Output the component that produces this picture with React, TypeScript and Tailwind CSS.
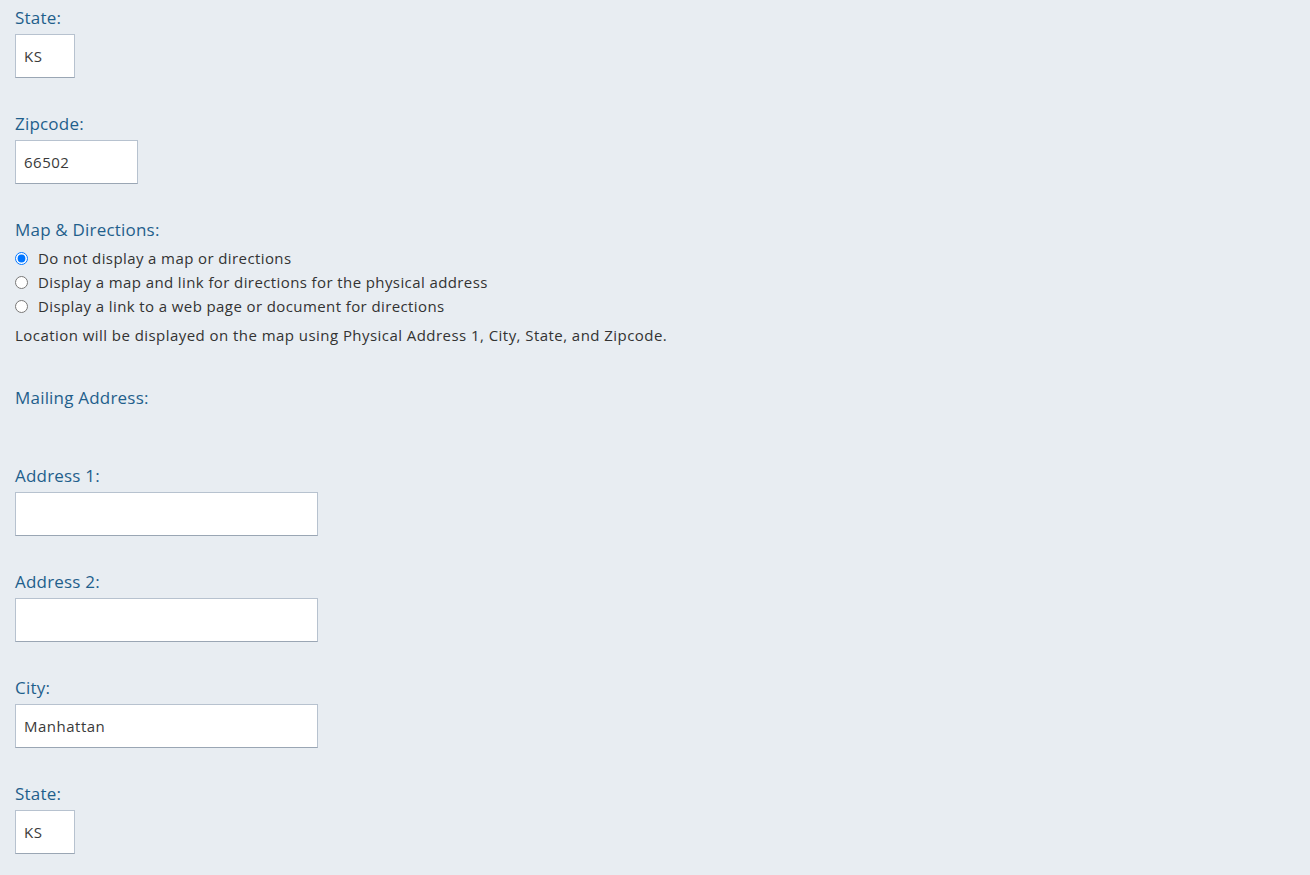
import React from "react";

const labelCls = "block text-[17px] leading-6 tracking-[0.2px] text-[#1f5f8c] mb-1";
const inputCls =
  "h-[44px] bg-white border border-[#b7c2cf] border-b-[#9aa6b4] px-[8px] text-[15px] tracking-[0.5px] text-[#3a3a3a] outline-none";

function Field({ label, value, width }: { label: string; value: string; width: string }) {
  return (
    <div className="mb-[34px]">
      <label className={labelCls}>{label}</label>
      <input className={`${inputCls} ${width}`} defaultValue={value} />
    </div>
  );
}

export default function App() {
  const options = [
    "Do not display a map or directions",
    "Display a map and link for directions for the physical address",
    "Display a link to a web page or document for directions",
  ];
  return (
    <div
      className="min-h-[875px] bg-[#e8edf2] px-[15px] pt-[6px] text-[#333333]"
      style={{ fontFamily: '"Open Sans", "Noto Sans", sans-serif' }}
    >
      <Field label="State:" value="KS" width="w-[60px]" />
      <Field label="Zipcode:" value="66502" width="w-[123px]" />
      <div className="mb-[39px]">
        <div className={labelCls}>Map &amp; Directions:</div>
        <div className="flex flex-col">
          {options.map((o, i) => (
            <label key={o} className="flex items-center h-6 text-[15px] tracking-[0.4px]">
              <input
                type="radio"
                name="map"
                defaultChecked={i === 0}
                className="m-0 w-[13px] h-[13px] mr-[10px]"
              />
              {o}
            </label>
          ))}
        </div>
        <p className="mt-[5px] text-[15px] leading-6 tracking-[0.45px]">
          Location will be displayed on the map using Physical Address 1, City, State, and Zipcode.
        </p>
      </div>
      <div className={`${labelCls} mb-[54px]`}>Mailing Address:</div>
      <Field label="Address 1:" value="" width="w-[303px]" />
      <Field label="Address 2:" value="" width="w-[303px]" />
      <Field label="City:" value="Manhattan" width="w-[303px]" />
      <Field label="State:" value="KS" width="w-[60px]" />
    </div>
  );
}
